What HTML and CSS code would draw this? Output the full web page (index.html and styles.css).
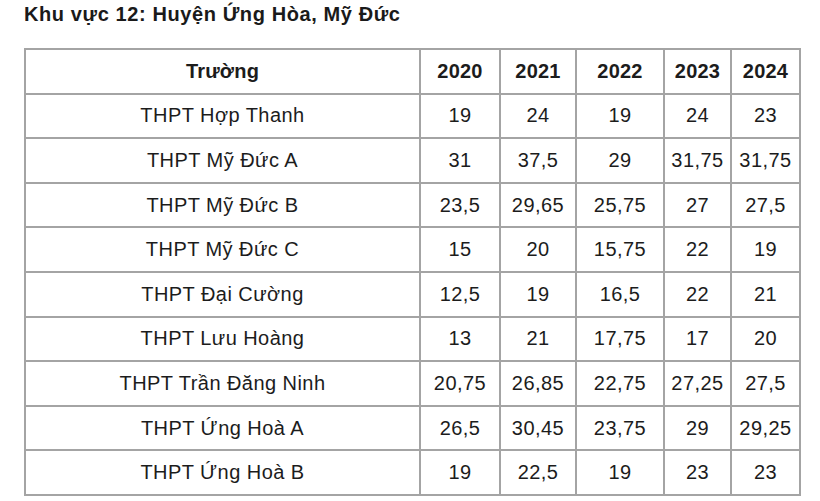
FILE: index.html
```html
<!DOCTYPE html>
<html lang="vi">
<head>
<meta charset="utf-8">
<title>Khu vực 12</title>
<link rel="stylesheet" href="styles.css">
</head>
<body>
<h2 class="title">Khu vực 12: Huyện Ứng Hòa, Mỹ Đức</h2>
<table class="scores">
  <colgroup>
    <col class="c-name"><col class="c-2020"><col class="c-2021"><col class="c-2022"><col class="c-2023"><col class="c-2024">
  </colgroup>
  <thead>
    <tr><th>Trường</th><th>2020</th><th>2021</th><th>2022</th><th>2023</th><th>2024</th></tr>
  </thead>
  <tbody>
    <tr><td>THPT Hợp Thanh</td><td>19</td><td>24</td><td>19</td><td>24</td><td>23</td></tr>
    <tr><td>THPT Mỹ Đức A</td><td>31</td><td>37,5</td><td>29</td><td>31,75</td><td>31,75</td></tr>
    <tr><td>THPT Mỹ Đức B</td><td>23,5</td><td>29,65</td><td>25,75</td><td>27</td><td>27,5</td></tr>
    <tr><td>THPT Mỹ Đức C</td><td>15</td><td>20</td><td>15,75</td><td>22</td><td>19</td></tr>
    <tr><td>THPT Đại Cường</td><td>12,5</td><td>19</td><td>16,5</td><td>22</td><td>21</td></tr>
    <tr><td>THPT Lưu Hoàng</td><td>13</td><td>21</td><td>17,75</td><td>17</td><td>20</td></tr>
    <tr><td>THPT Trần Đăng Ninh</td><td>20,75</td><td>26,85</td><td>22,75</td><td>27,25</td><td>27,5</td></tr>
    <tr><td>THPT Ứng Hoà A</td><td>26,5</td><td>30,45</td><td>23,75</td><td>29</td><td>29,25</td></tr>
    <tr><td>THPT Ứng Hoà B</td><td>19</td><td>22,5</td><td>19</td><td>23</td><td>23</td></tr>
  </tbody>
</table>
</body>
</html>
```
FILE: styles.css
```css
html, body {
  margin: 0;
  padding: 0;
  background: #ffffff;
}
body {
  font-family: "Liberation Sans", Arial, sans-serif;
  color: #1c1c1c;
  padding: 2px 0 0 24px;
}
.title {
  margin: 0;
  font-size: 20px;
  line-height: 24px;
  font-weight: bold;
  letter-spacing: 0.6px;
  color: #1a1a1a;
}
.scores {
  margin-top: 22px;
  border-collapse: collapse;
  width: 775px;
  table-layout: fixed;
  font-size: 20px;
  letter-spacing: 0.45px;
}
.c-name { width: 395px; }
.c-2020 { width: 80px; }
.c-2021 { width: 76px; }
.c-2022 { width: 88px; }
.c-2023 { width: 67px; }
.c-2024 { width: 69px; }
.scores th,
.scores td {
  border: 2px solid #a4a4a4;
  text-align: center;
  line-height: 23px;
  padding: 9.8px 0;
  color: #1c1c1c;
  white-space: nowrap;
}
.scores th {
  font-weight: bold;
  letter-spacing: 0.2px;
}
```
